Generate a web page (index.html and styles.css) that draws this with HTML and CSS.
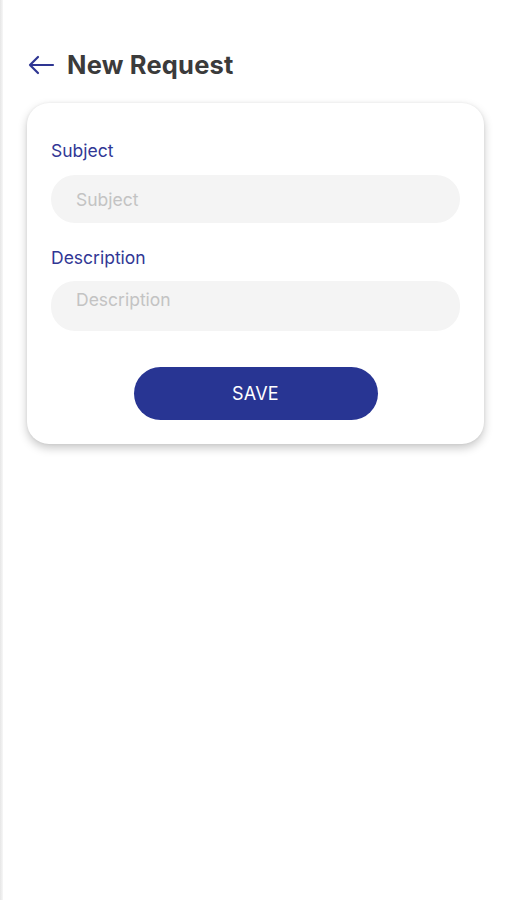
FILE: index.html
```html
<!DOCTYPE html>
<html>
<head>
<meta charset="utf-8">
<link rel="stylesheet" href="styles.css">
</head>
<body>
<div class="edge"></div>
<div class="screen">
  <header class="topbar">
    <svg class="back" width="28" height="20" viewBox="0 0 28 20">
      <path d="M26 10H3M11 2L3 10l8 8" fill="none" stroke="#2e3592" stroke-width="2.2" stroke-linecap="round" stroke-linejoin="round"/>
    </svg>
    <h1 class="title">New Request</h1>
  </header>
  <main class="card">
    <label class="label">Subject</label>
    <div class="input"><span class="ph">Subject</span></div>
    <label class="label label2">Description</label>
    <div class="input area"><span class="ph">Description</span></div>
    <div class="actions"><button class="save">SAVE</button></div>
  </main>
</div>
</body>
</html>
```
FILE: styles.css
```css
* { box-sizing: border-box; }
html, body { margin: 0; padding: 0; background: #fff; }
body { font-family: "Inter", "Roboto", "Liberation Sans", sans-serif; width: 507px; height: 900px; overflow: hidden; position: relative; }
.edge { position: absolute; left: 0; top: 0; width: 3px; height: 900px; background: linear-gradient(to right, #e6e6e6, #f7f7f7); }
.screen { padding: 0 23px 0 27px; }
.topbar { display: flex; align-items: center; height: 58px; margin-top: 35px; gap: 12px; }
.back { display: block; margin-top: 1px; }
.title { margin: 0; font-size: 25.5px; font-weight: 700; color: #3b3b3b; letter-spacing: 0.2px; }
.card { margin-top: 10px; background: #fff; border-radius: 22px; box-shadow: 0 4px 10px rgba(0,0,0,0.22), 0 0 3px rgba(0,0,0,0.06); padding: 36px 24px 24px 24px; display: flex; flex-direction: column; height: 341px; }
.label { font-size: 17.5px; color: #313795; line-height: 24px; }
.label2 { margin-top: 23px; }
.input { margin-top: 12px; height: 48px; border-radius: 24px; background: #f4f4f4; padding: 0 25px; display: flex; align-items: center; }
.ph { font-size: 17.5px; color: #c3c3c3; }
.area { height: 50px; margin-top: 11px; align-items: flex-start; padding-top: 8px; }
.actions { display: flex; justify-content: center; margin-top: 36px; }
.save { width: 244px; height: 53px; border: 0; border-radius: 27px; background: #283593; color: #fff; font-family: inherit; font-size: 18px; letter-spacing: 0.2px; }
```
